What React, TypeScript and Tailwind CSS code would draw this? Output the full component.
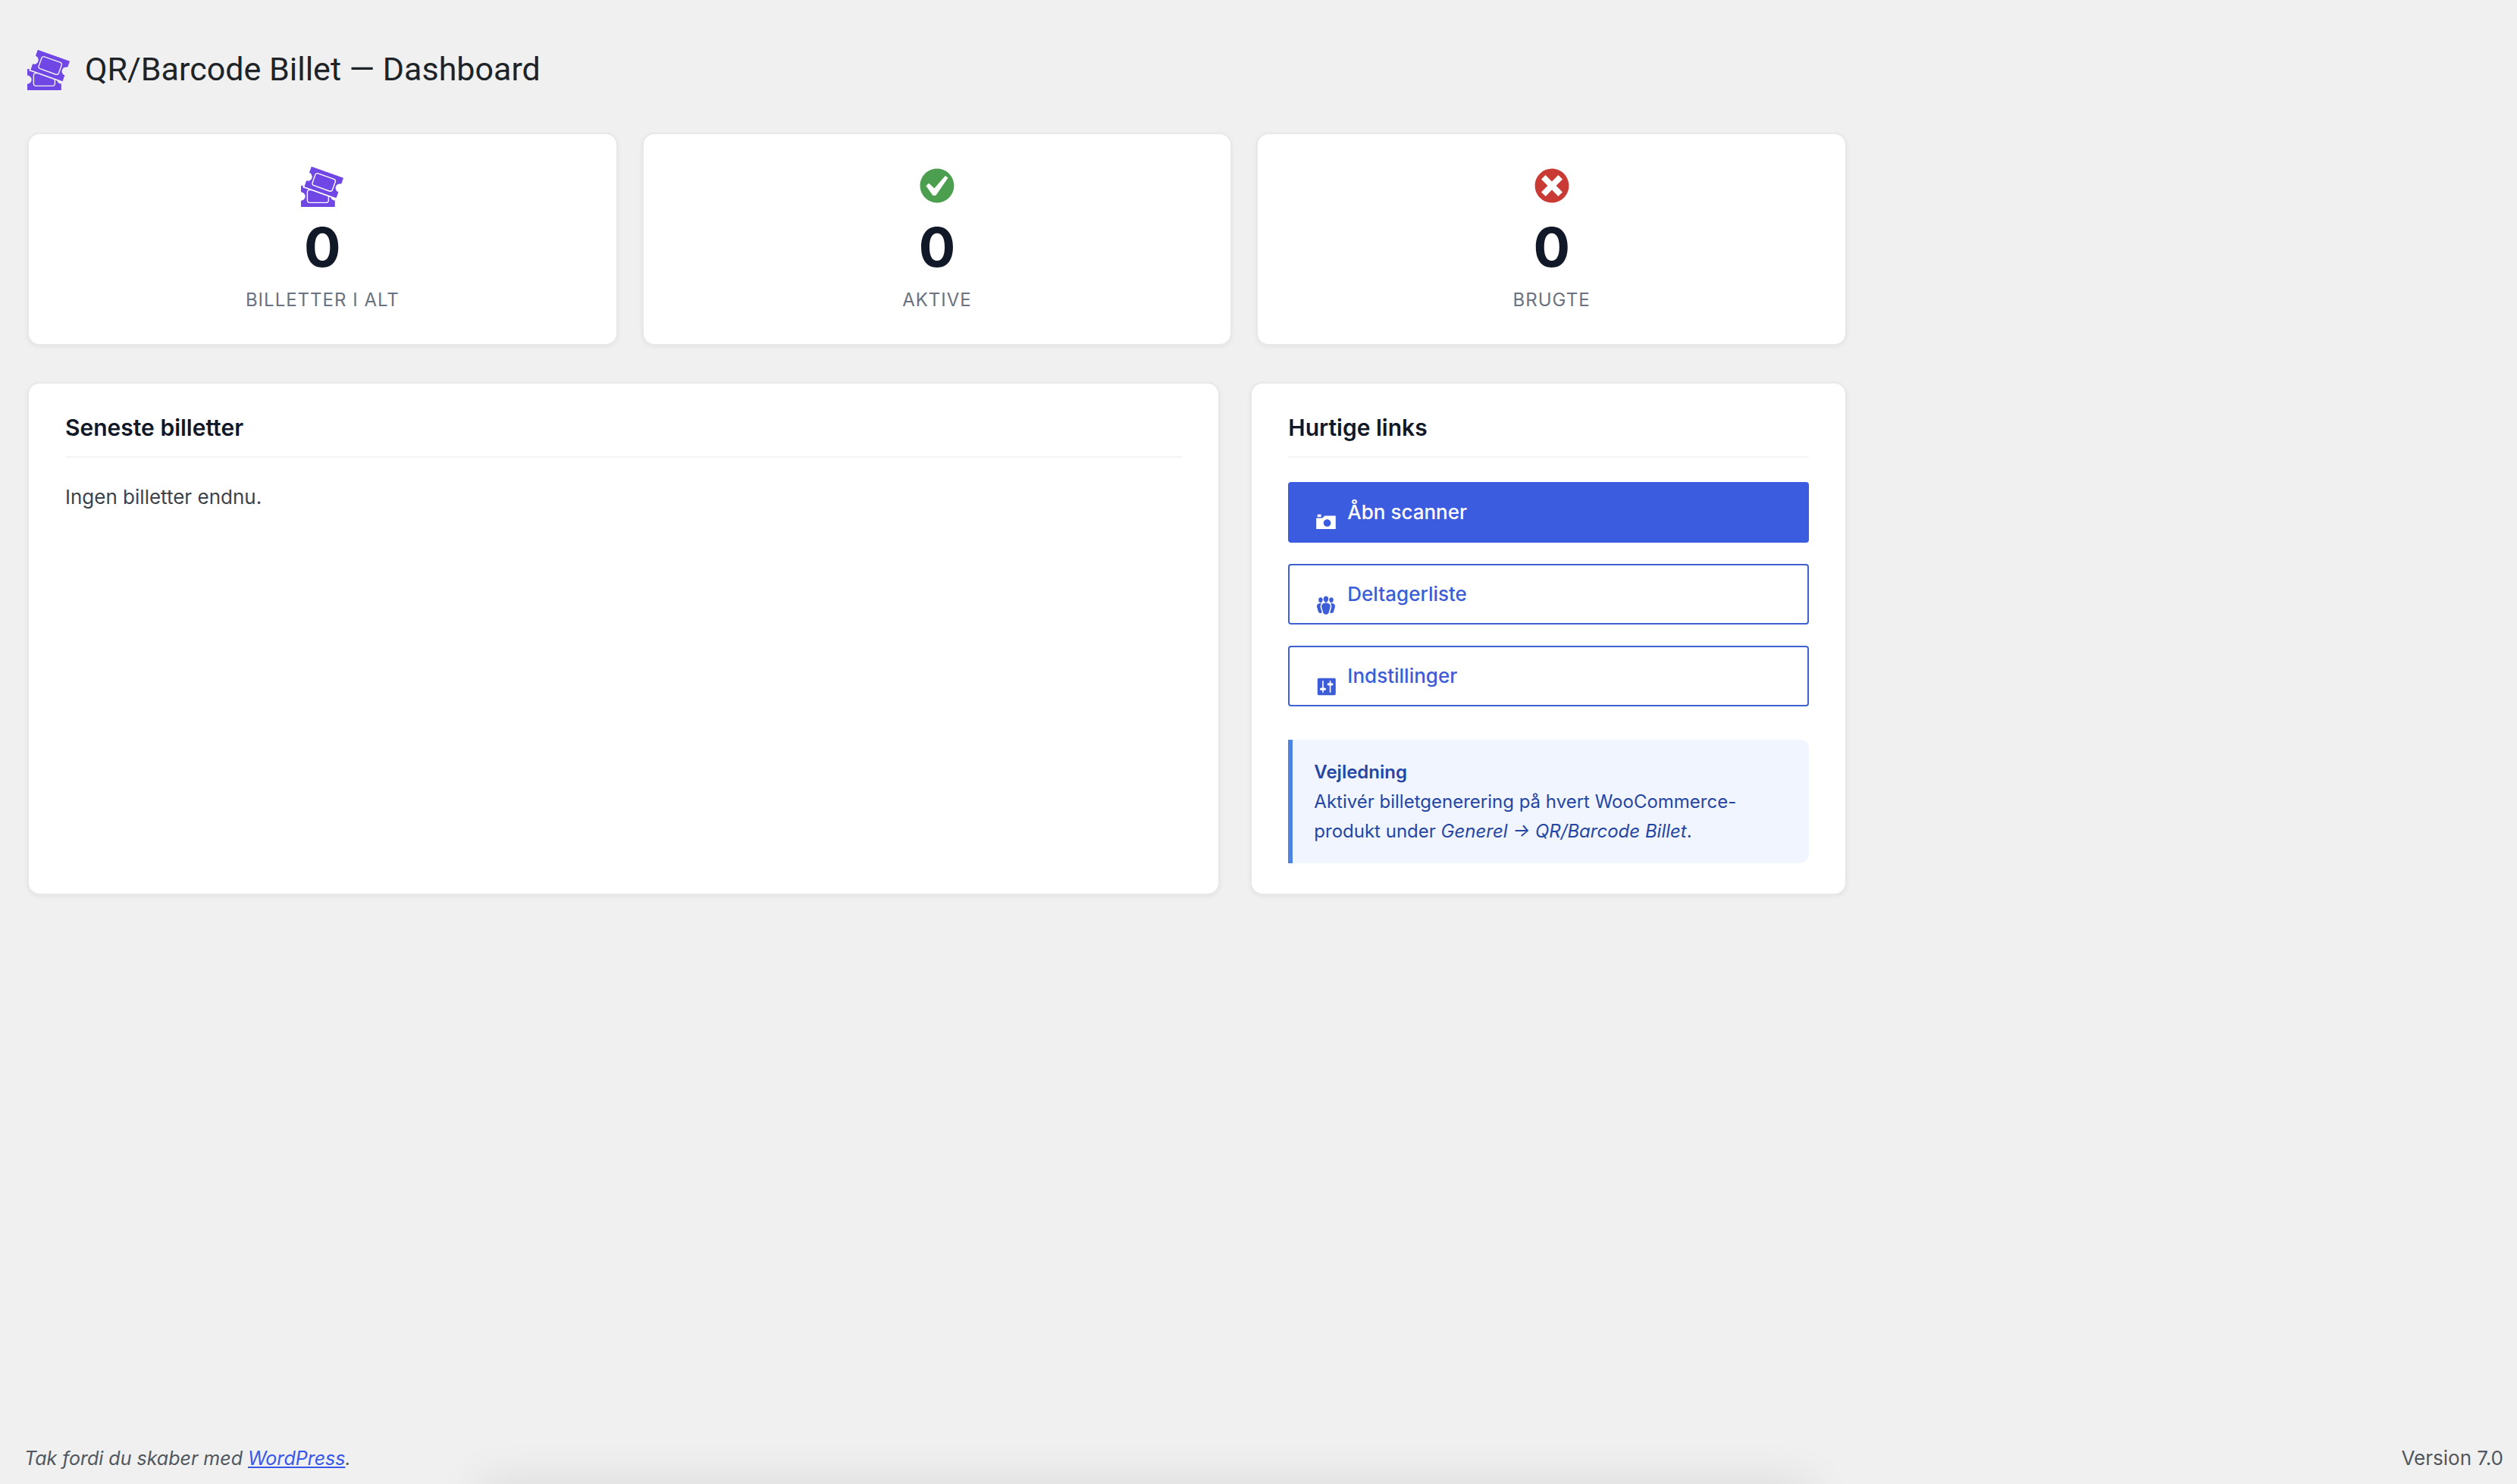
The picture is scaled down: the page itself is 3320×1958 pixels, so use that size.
import React from "react";

const icons = {
  tickets:
    "M20 6.38L18.99 9.2v-.01c-.52-.19-1.03-.16-1.53.08s-.85.62-1.04 1.14-.16 1.03.07 1.53c.24.5.62.84 1.15 1.03v.01l-1.01 2.82-15.06-5.38.99-2.79c.52.19 1.03.16 1.53-.08.5-.23.84-.61 1.03-1.13s.16-1.03-.08-1.53c-.23-.49-.61-.83-1.13-1.02L4.93 1zm-4.97 5.69l1.37-3.76c.12-.31.1-.65-.04-.95s-.39-.53-.7-.65L8.14 3.98c-.64-.23-1.37.12-1.6.74L5.17 8.48c-.24.65.1 1.37.74 1.6l7.52 2.74c.14.05.28.08.43.08.52 0 1-.33 1.17-.83zM7.97 4.45l7.51 2.73c.19.07.34.21.43.39.08.18.09.38.02.57l-1.37 3.76c-.13.38-.58.59-.96.45L6.09 9.61c-.39-.14-.59-.57-.45-.96l1.37-3.76c.1-.29.39-.49.7-.49.09 0 .17.02.26.05zm6.82 12.14c.35.27.75.41 1.2.41H16v3H0v-2.96c.55 0 1.03-.2 1.41-.59.39-.38.59-.86.59-1.41s-.2-1.02-.59-1.41-.86-.59-1.41-.59V10h1.05l-.28.8 2.87 1.02c-.51.16-.89.62-.89 1.18v4c0 .69.56 1.25 1.25 1.25h8c.69 0 1.25-.56 1.25-1.25v-1.75l.83.3c.12.43.36.78.71 1.04zM3.25 17v-4c0-.41.34-.75.75-.75h.83l7.92 2.83V17c0 .41-.34.75-.75.75H4c-.41 0-.75-.34-.75-.75z",
  check:
    "M10 2c-4.42 0-8 3.58-8 8s3.58 8 8 8 8-3.58 8-8-3.58-8-8-8zm-.615 12.66h-1.34l-3.24-4.54 1.341-1.25 2.569 2.4 5.141-5.931 1.34.94-5.811 8.381z",
  dismiss:
    "M10 2c4.42 0 8 3.58 8 8s-3.58 8-8 8-8-3.58-8-8 3.58-8 8-8zm5 11l-3-3 3-3-2-2-3 3-3-3-2 2 3 3-3 3 2 2 3-3 3 3z",
  camera:
    "M6 5V3H3v2h3zm12 10V4H9L7 6H2v9h16zm-7-8c1.66 0 3 1.34 3 3s-1.34 3-3 3-3-1.34-3-3 1.34-3 3-3z",
  groups:
    "M8.03 4.46c-.29 1.28.55 3.46 1.97 3.46 1.41 0 2.25-2.18 1.96-3.46-.22-.98-1.08-1.63-1.96-1.63-.89 0-1.74.65-1.97 1.63zm-4.13.9c-.25 1.08.47 2.93 1.67 2.93s1.92-1.85 1.67-2.93c-.19-.83-.92-1.39-1.67-1.39s-1.48.56-1.67 1.39zm8.86 0c-.25 1.08.47 2.93 1.66 2.93 1.2 0 1.92-1.85 1.67-2.93-.19-.83-.92-1.39-1.67-1.39-.74 0-1.47.56-1.66 1.39zm-.59 11.43l1.25-4.3C14.2 10 12.71 8.47 10 8.47c-2.72 0-4.21 1.53-3.44 4.02l1.26 4.3C8.05 17.51 9 18 10 18c.98 0 1.94-.49 2.17-1.21zm-6.1-7.63c-.49.67-.96 1.83-.42 3.59l1.12 3.79c-.34.2-.77.31-1.2.31-.85 0-1.65-.41-1.85-1.03l-1.07-3.65c-.65-2.11.61-3.4 2.92-3.4.27 0 .54.02.79.06-.1.1-.2.22-.29.33zm8.35-.39c2.31 0 3.58 1.29 2.92 3.4l-1.07 3.65c-.2.62-1 1.03-1.85 1.03-.43 0-.86-.11-1.2-.31l1.11-3.77c.55-1.78.08-2.94-.42-3.61-.08-.11-.18-.23-.28-.33.25-.04.51-.06.79-.06z",
  settings:
    "M18 16V4c0-.55-.45-1-1-1H4c-.55 0-1 .45-1 1v12c0 .55.45 1 1 1h13c.55 0 1-.45 1-1zM8 11h1c.55 0 1 .45 1 1s-.45 1-1 1H8v1.5c0 .28-.22.5-.5.5s-.5-.22-.5-.5V13H6c-.55 0-1-.45-1-1s.45-1 1-1h1V5.5c0-.28.22-.5.5-.5s.5.22.5.5V11zm5-2h-1c-.55 0-1-.45-1-1s.45-1 1-1h1V5.5c0-.28.22-.5.5-.5s.5.22.5.5V7h1c.55 0 1 .45 1 1s-.45 1-1 1h-1v5.5c0 .28-.22.5-.5.5s-.5-.22-.5-.5V9z",
};

type IconName = keyof typeof icons;

function Icon({ name, className }: { name: IconName; className: string }) {
  return (
    <svg viewBox="0 0 20 20" fill="currentColor" fillRule="evenodd" aria-hidden="true" className={className}>
      <path d={icons[name]} />
    </svg>
  );
}

const cardClass =
  "rounded-2xl border-2 border-[#e8e8e8] bg-white bg-clip-padding shadow-[0_2px_6px_rgba(0,0,0,0.05)]";

const stats: { icon: IconName; color: string; value: number; label: string }[] = [
  { icon: "tickets", color: "text-[#7046e5]", value: 0, label: "Billetter i alt" },
  { icon: "check", color: "text-[#4d9f50]", value: 0, label: "Aktive" },
  { icon: "dismiss", color: "text-[#c93a35]", value: 0, label: "Brugte" },
];

const links: { icon: IconName; label: string; primary: boolean }[] = [
  { icon: "camera", label: "Åbn scanner", primary: true },
  { icon: "groups", label: "Deltagerliste", primary: false },
  { icon: "settings", label: "Indstillinger", primary: false },
];

function StatCard({ icon, color, value, label }: (typeof stats)[number]) {
  return (
    <div className={`${cardClass} flex flex-col items-center p-10`}>
      <Icon name={icon} className={`size-14 ${color}`} />
      <div className="mt-[13px] text-[72px] leading-[79px] font-bold text-[#111827]">{value}</div>
      <div className="mt-[13px] text-2xl leading-9 tracking-[1px] text-[#6b7280] uppercase">{label}</div>
    </div>
  );
}

function Panel({ title, children }: { title: string; children: React.ReactNode }) {
  return (
    <section className={`${cardClass} px-12 py-10`}>
      <h2 className="mb-8 border-b-2 border-[#f3f4f6] pb-5 text-[30px] leading-9 font-semibold text-[#111827]">
        {title}
      </h2>
      {children}
    </section>
  );
}

export default function App() {
  return (
    <div className="relative flex min-h-screen flex-col overflow-hidden bg-[#f0f0f0] font-['Inter',sans-serif] text-[26px] leading-[39px] text-[#3c434a]">
      <main className="w-full max-w-[2472px] px-9 pt-[63px]">
        <h1 className="flex items-center gap-5 font-['Roboto',sans-serif] text-[43px] leading-14 font-normal text-[#1d2327]">
          <Icon name="tickets" className="size-14 shrink-0 text-[#7046e5]" />
          QR/Barcode Billet — Dashboard
        </h1>

        <div className="mt-14 grid grid-cols-3 gap-8">
          {stats.map((s) => (
            <StatCard key={s.label} {...s} />
          ))}
        </div>

        <div className="mt-12 grid grid-cols-[2fr_1fr] gap-10">
          <Panel title="Seneste billetter">
            <p>Ingen billetter endnu.</p>
          </Panel>
          <Panel title="Hurtige links">
            <nav className="flex flex-col gap-7">
              {links.map((l) => (
                <a
                  key={l.label}
                  href="#"
                  className={`flex h-20 items-center gap-3 rounded-sm border-2 px-8 pb-0.5 font-medium ${
                    l.primary
                      ? "border-[#3c5ce0] bg-[#3c5ce0] text-white"
                      : "border-[#3f60d0] bg-white text-[#3c5cd8]"
                  }`}
                >
                  <Icon name={l.icon} className="mt-[30px] size-8 shrink-0" />
                  {l.label}
                </a>
              ))}
            </nav>
            <div className="mt-11 rounded-r-xl border-l-6 border-[#4f83e3] bg-[#f0f5ff] px-7 py-[23px] text-2xl leading-[39px] text-[#2546a3]">
              <strong className="block font-semibold">Vejledning</strong>
              <p>
                Aktivér billetgenerering på hvert WooCommerce-produkt under <em>Generel → QR/Barcode Billet</em>.
              </p>
            </div>
          </Panel>
        </div>
      </main>

      <footer className="mt-auto flex items-baseline justify-between pr-[18px] pb-[14px] pl-8 text-[#50575e]">
        <p className="text-[25px] italic">
          Tak fordi du skaber med{" "}
          <a href="#" className="text-[#3858e9] underline">
            WordPress
          </a>
          .
        </p>
        <p>Version 7.0</p>
      </footer>

      <div
        aria-hidden="true"
        className="pointer-events-none absolute top-full right-[28%] left-[19%] h-10 shadow-[0_0_60px_rgba(0,0,0,0.11)]"
      />
    </div>
  );
}
